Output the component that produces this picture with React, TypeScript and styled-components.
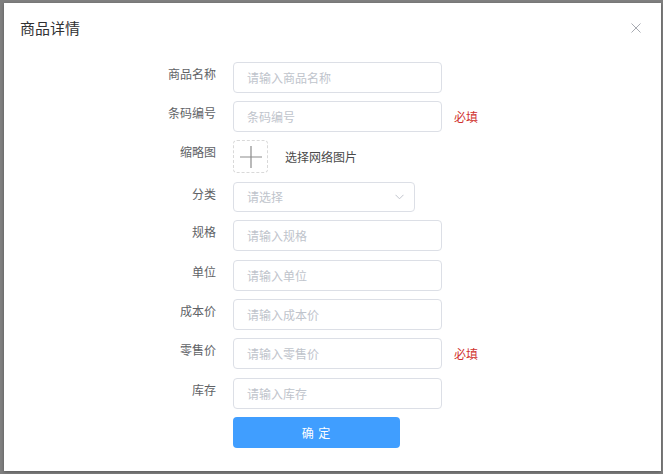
import React from "react";
import styled, { createGlobalStyle } from "styled-components";

const Global = createGlobalStyle`
  html, body { margin: 0; padding: 0; }
  body {
    font-family: "Noto Sans CJK SC", "Noto Sans", sans-serif;
    background: #7f7f7f;
  }
  * { box-sizing: border-box; }
`;

const Overlay = styled.div`
  width: 663px;
  height: 474px;
  background: #7f7f7f;
  padding: 3px 2px 3px 4px;
  overflow: hidden;
`;

const Dialog = styled.div`
  width: 657px;
  height: 468px;
  background: #ffffff;
  display: flex;
  flex-direction: column;
  box-shadow: 0 1px 3px rgba(0, 0, 0, 0.3);
`;

const Header = styled.div`
  height: 50px;
  display: flex;
  align-items: center;
  justify-content: space-between;
  padding: 0 19px 0 16px;
`;

const Title = styled.span`
  font-size: 15px;
  color: #303133;
  line-height: 20px;
`;

const Close = styled.button`
  border: none;
  background: none;
  padding: 0;
  width: 12px;
  height: 12px;
  display: flex;
  align-items: center;
  justify-content: center;
  cursor: pointer;
`;

const Form = styled.div`
  display: flex;
  flex-direction: column;
  gap: 8.4px;
  padding: 8.7px 0 0 132px;
`;

const Row = styled.div`
  display: flex;
  align-items: flex-start;
  gap: 17px;
`;

const Label = styled.div`
  width: 80px;
  text-align: right;
  font-size: 12px;
  line-height: 16px;
  padding-top: 4px;
  color: #606266;
  flex-shrink: 0;
`;

const FieldLine = styled.div`
  display: flex;
  align-items: center;
`;

const Input = styled.input<{ $w?: number }>`
  width: ${(p) => p.$w ?? 209}px;
  height: 31px;
  border: 1px solid #dcdfe6;
  border-radius: 4px;
  padding: 0 13px;
  font-family: "Noto Sans CJK SC", "Noto Sans", sans-serif;
  font-size: 12px;
  color: #606266;
  outline: none;
  background: #fff;
  &::placeholder {
    color: #c0c4cc;
  }
`;

const Required = styled.span`
  margin-left: 12px;
  font-size: 12px;
  color: #d0312d;
`;

const Upload = styled.div`
  width: 35px;
  height: 33px;
  border: 1px dashed #d9d9d9;
  border-radius: 4px;
  display: flex;
  align-items: center;
  justify-content: center;
`;

const UploadText = styled.span`
  margin-left: 17px;
  font-size: 12px;
  color: #4a4a4a;
`;

const Select = styled.div`
  width: 182px;
  height: 30px;
  border: 1px solid #dcdfe6;
  border-radius: 4px;
  padding: 0 10px 0 13px;
  display: flex;
  align-items: center;
  justify-content: space-between;
  font-size: 12px;
  color: #c0c4cc;
`;

const Button = styled.button`
  width: 167px;
  height: 31px;
  border: none;
  border-radius: 4px;
  background: #409eff;
  color: #ffffff;
  font-family: "Noto Sans CJK SC", "Noto Sans", sans-serif;
  font-size: 12px;
  letter-spacing: 1px;
  cursor: pointer;
`;

const fields: { label: string; placeholder: string; required?: boolean }[] = [
  { label: "规格", placeholder: "请输入规格" },
  { label: "单位", placeholder: "请输入单位" },
  { label: "成本价", placeholder: "请输入成本价" },
  { label: "零售价", placeholder: "请输入零售价", required: true },
  { label: "库存", placeholder: "请输入库存" },
];

export default function App() {
  return (
    <>
      <Global />
      <Overlay>
        <Dialog>
          <Header>
            <Title>商品详情</Title>
            <Close aria-label="close">
              <svg width="10" height="10" viewBox="0 0 10 10">
                <path d="M0.5 0.5 L9.5 9.5 M9.5 0.5 L0.5 9.5" stroke="#a8abb2" strokeWidth="1" />
              </svg>
            </Close>
          </Header>
          <Form>
            <Row>
              <Label>商品名称</Label>
              <FieldLine>
                <Input placeholder="请输入商品名称" />
              </FieldLine>
            </Row>
            <Row>
              <Label>条码编号</Label>
              <FieldLine>
                <Input placeholder="条码编号" />
                <Required>必填</Required>
              </FieldLine>
            </Row>
            <Row>
              <Label>缩略图</Label>
              <FieldLine>
                <Upload>
                  <svg width="22" height="22" viewBox="0 0 22 22">
                    <path d="M11 0 V22 M0 11 H22" stroke="#8c8c8c" strokeWidth="1.2" />
                  </svg>
                </Upload>
                <UploadText>选择网络图片</UploadText>
              </FieldLine>
            </Row>
            <Row>
              <Label>分类</Label>
              <FieldLine>
                <Select>
                  <span>请选择</span>
                  <svg width="9" height="6" viewBox="0 0 9 6">
                    <path d="M0.5 0.8 L4.5 4.8 L8.5 0.8" stroke="#c0c4cc" strokeWidth="1" fill="none" />
                  </svg>
                </Select>
              </FieldLine>
            </Row>
            {fields.map((f) => (
              <Row key={f.label}>
                <Label>{f.label}</Label>
                <FieldLine>
                  <Input placeholder={f.placeholder} />
                  {f.required && <Required>必填</Required>}
                </FieldLine>
              </Row>
            ))}
            <Row>
              <Label />
              <Button>确 定</Button>
            </Row>
          </Form>
        </Dialog>
      </Overlay>
    </>
  );
}
